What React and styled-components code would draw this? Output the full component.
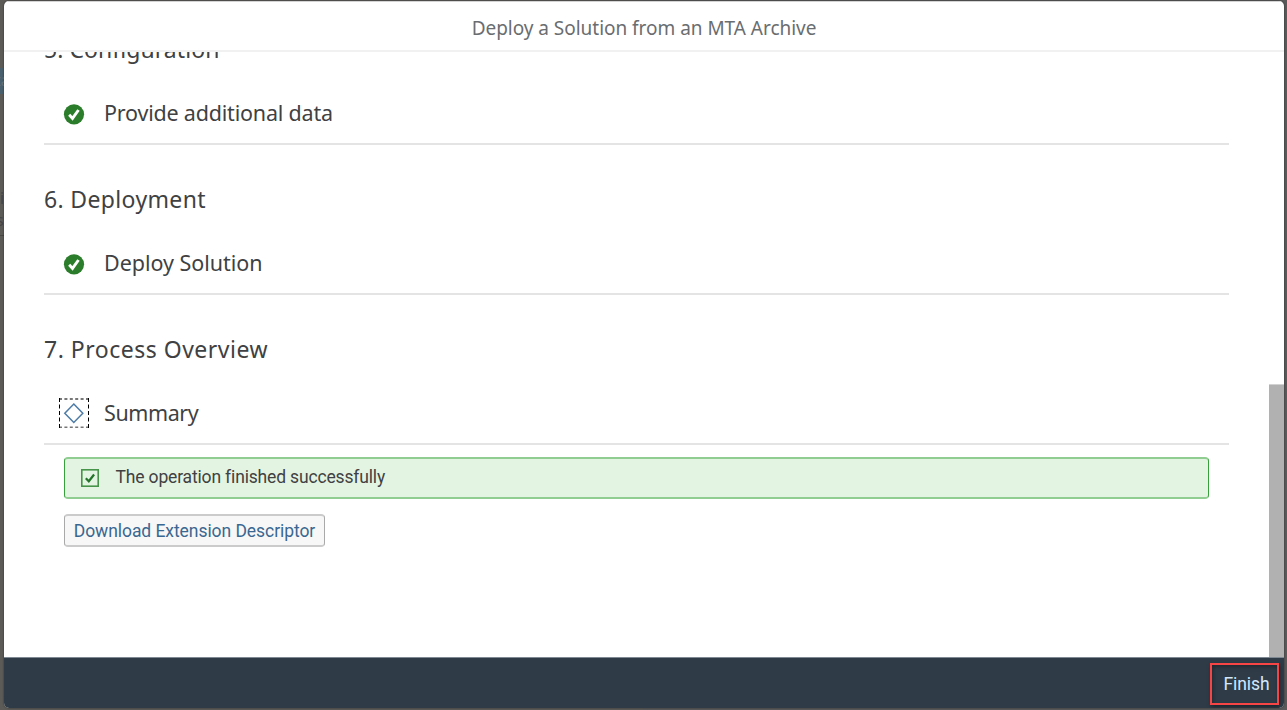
import React from "react";
import styled, { createGlobalStyle } from "styled-components";

const GlobalStyle = createGlobalStyle`
  * { box-sizing: border-box; }
  body {
    margin: 0;
    overflow: hidden;
    background: #5d5c5a;
    font-family: "Noto Sans", "Liberation Sans", sans-serif;
    color: #404142;
  }
`;

const Page = styled.div`
  position: relative;
  height: 710px;
  padding: 1px 3px 2px 4px;
  background: linear-gradient(90deg, #5d5b58 0, #5d5b58 50%, #5a5a5a 50%);
  overflow: hidden;
`;

const Backdrop = styled.div`
  position: absolute;
  top: 0;
  left: 0;
  width: 4px;
  height: 710px;
  overflow: hidden;
  white-space: nowrap;
  font-size: 16px;
  line-height: 20px;
  color: #464544;
`;

const BackdropTab = styled.div`
  height: 26px;
  margin-top: 68px;
  line-height: 24px;
  text-indent: -5px;
  background: #49606e;
  color: #66747b;
`;

const BackdropText = styled.div`
  height: 22px;
  margin-top: ${(p) => p.$gap}px;
  text-indent: ${(p) => p.$indent}px;
`;

const BackdropRule = styled.div`
  height: 1px;
  margin-top: 3px;
  background: #484746;
`;

const Dialog = styled.section`
  position: relative;
  display: flex;
  flex-direction: column;
  height: 707px;
  border-radius: 5px;
  overflow: hidden;
  background: #fff;
  box-shadow: 0 0 2px rgba(0, 0, 0, 0.55);
`;

const Header = styled.header`
  flex: none;
  height: 51px;
  border-top: 1px solid #d4d4d4;
  border-bottom: 2px solid #f1f1f1;
  text-align: center;
`;

const Title = styled.h1`
  margin: 0;
  font-size: 19px;
  font-weight: 400;
  line-height: 52px;
  height: 48px;
  letter-spacing: -0.03px;
  color: #6a6d70;
`;

const Body = styled.div`
  flex: 1;
  display: flex;
  min-height: 0;
`;

const Content = styled.main`
  flex: 1;
  overflow: hidden;
  padding: 0 40px;
`;

const Steps = styled.div`
  margin-top: -57px;
`;

const Step = styled.section`
  height: 150px;
  padding-top: 30px;
  border-bottom: 2px solid #e4e4e4;
`;

const StepTitle = styled.h2`
  margin: 0 0 10px;
  font-size: 23px;
  font-weight: 400;
  line-height: 48px;
  letter-spacing: ${(p) => p.$tracking}px;
`;

const Task = styled.div`
  display: flex;
  align-items: center;
  height: 60px;
  padding: 0 0 2px 15px;
  gap: 15px;
  font-size: 21.5px;
  letter-spacing: ${(p) => p.$tracking}px;
`;

const StatusIcon = styled.svg`
  flex: none;
  width: 30px;
  height: 30px;
  margin-top: ${(p) => p.$drop || 0}px;
`;

const Result = styled.div`
  padding: 12px 20px 0;
`;

const MessageStrip = styled.div`
  display: flex;
  align-items: center;
  height: 42px;
  padding: 0 0 2px 15px;
  gap: 15.5px;
  border: solid #8fcd90;
  border-width: 2px 1px;
  border-left-color: #36a03b;
  border-right-color: #36a03b;
  border-radius: 4px;
  background: #e4f4e3;
  font-family: Roboto, "Liberation Sans", sans-serif;
  font-size: 17.5px;
  letter-spacing: -0.16px;
`;

const CheckIcon = styled.svg`
  flex: none;
  width: 20px;
  height: 20px;
  margin-top: 2px;
`;

const DownloadButton = styled.button`
  display: block;
  width: 261px;
  height: 33px;
  margin-top: 15px;
  padding: 0;
  border: solid #cbcbcb;
  border-width: 2px 1px;
  border-left-color: #a9a9a9;
  border-right-color: #a9a9a9;
  border-radius: 4px;
  background: #f7f7f7;
  font: 17.5px Roboto, "Liberation Sans", sans-serif;
  letter-spacing: -0.06px;
  color: #3a6791;
  white-space: nowrap;
`;

const Scrollbar = styled.div`
  flex: none;
  width: 15px;
  padding-top: 332px;
`;

const Thumb = styled.div`
  height: 100%;
  border-top: 1px solid #d2d2d2;
  background: #b1b1b1;
`;

const Footer = styled.footer`
  flex: none;
  display: flex;
  justify-content: flex-end;
  height: 51px;
  padding: 5px 5px 0 0;
  border-top: 1px solid #7f8994;
  background: #2f3c48;
`;

const FinishButton = styled.button`
  width: 69px;
  height: 42px;
  padding: 0 0 1px 4px;
  border: 2px solid #f74545;
  background: transparent;
  box-shadow: 1px 2px 4px rgba(0, 0, 0, 0.4), inset 1px 2px 4px rgba(0, 0, 0, 0.35);
  font: 17.5px Roboto, "Liberation Sans", sans-serif;
  letter-spacing: -0.1px;
  color: #d1e8ff;
`;

const DoneIcon = () => (
  <StatusIcon viewBox="0 0 30 30" $drop={4}>
    <circle cx="15" cy="15.3" r="10.1" fill="#2b7d2b" />
    <path d="M10.2 15.8l3.3 3.6 6-8.4" fill="none" stroke="#fff" strokeWidth="2.9" />
  </StatusIcon>
);

const CurrentIcon = () => (
  <StatusIcon viewBox="0 0 30 30" $drop={2}>
    <path d="M0 1h30M0 29.5h30" stroke="#777" strokeWidth="2" strokeDasharray="3 2.4" />
    <path d="M.5 0v30M29.5 0v30" stroke="#000" strokeDasharray="4 2.5" />
    <path d="M14.8 6.1l9 9.2-9 9.2-9-9.2z" fill="none" stroke="#4d7ba6" strokeWidth="1.5" />
  </StatusIcon>
);

export default function App() {
  return (
    <Page>
      <GlobalStyle />
      <Backdrop>
        <BackdropTab>ta</BackdropTab>
        <BackdropText $gap={94} $indent={0}>i</BackdropText>
        <BackdropText $gap={0} $indent={-4}>s</BackdropText>
        <BackdropRule />
      </Backdrop>
      <Dialog>
        <Header>
          <Title>Deploy a Solution from an MTA Archive</Title>
        </Header>
        <Body>
          <Content>
            <Steps>
              <Step>
                <StepTitle $tracking={0.06}>5. Configuration</StepTitle>
                <Task $tracking={-0.2}>
                  <DoneIcon />
                  Provide additional data
                </Task>
              </Step>
              <Step>
                <StepTitle $tracking={0.35}>6. Deployment</StepTitle>
                <Task $tracking={-0.03}>
                  <DoneIcon />
                  Deploy Solution
                </Task>
              </Step>
              <Step>
                <StepTitle $tracking={0.5}>7. Process Overview</StepTitle>
                <Task $tracking={-0.4}>
                  <CurrentIcon />
                  Summary
                </Task>
              </Step>
            </Steps>
            <Result>
              <MessageStrip>
                <CheckIcon viewBox="0 0 20 20">
                  <rect x="1.8" y="1.8" width="16.4" height="16.4" fill="none" stroke="#46934a" strokeWidth="1.6" />
                  <path d="M5.8 10.3l3 3 5.3-6.8" fill="none" stroke="#24752a" strokeWidth="2.2" />
                </CheckIcon>
                The operation finished successfully
              </MessageStrip>
              <DownloadButton>Download Extension Descriptor</DownloadButton>
            </Result>
          </Content>
          <Scrollbar>
            <Thumb />
          </Scrollbar>
        </Body>
        <Footer>
          <FinishButton>Finish</FinishButton>
        </Footer>
      </Dialog>
    </Page>
  );
}
